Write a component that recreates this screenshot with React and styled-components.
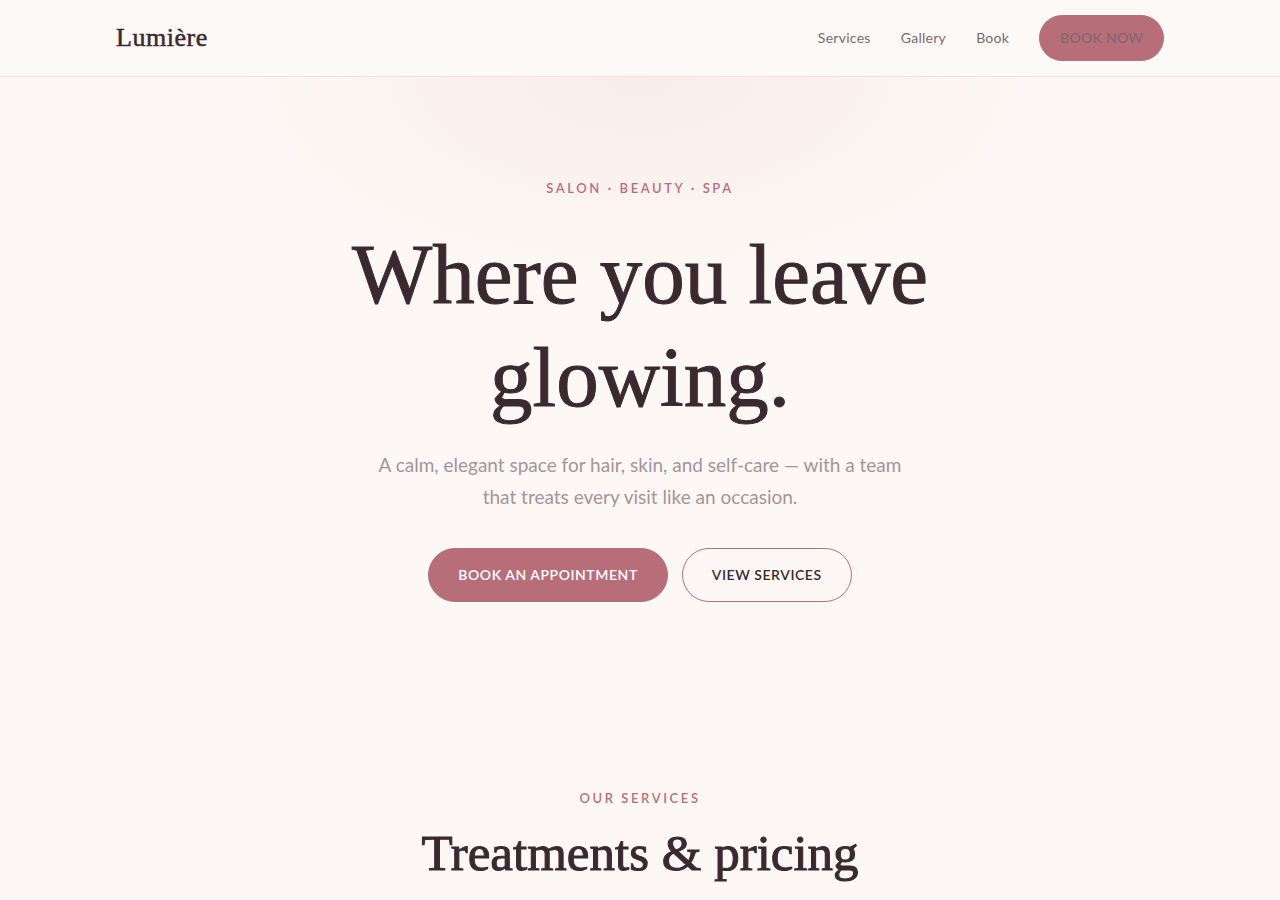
import React from "react";
import styled, { createGlobalStyle, css } from "styled-components";

const color = {
  page: "#fdf8f5",
  header: "#fdf9f6",
  line: "#f0e0e0",
  rose: "#b76e79",
  ink: "#3a2a30",
  nav: "#7d6870",
  muted: "#a39599",
};
const serif = '"Liberation Serif", "Times New Roman", serif';
const sans = 'Lato, "Liberation Sans", sans-serif';

const GlobalStyle = createGlobalStyle`
  *, *::before, *::after { box-sizing: border-box; }
  body {
    margin: 0;
    background: ${color.page};
    color: ${color.ink};
    font-family: ${sans};
    font-size: 16px;
  }
`;

const Header = styled.header`
  background: ${color.header};
  border-bottom: 1px solid ${color.line};
`;

const HeaderInner = styled.div`
  display: flex;
  align-items: center;
  justify-content: space-between;
  max-width: 1100px;
  margin: 0 auto;
  padding: 15px 26px;
`;

const Logo = styled.a`
  color: ${color.ink};
  font-family: ${serif};
  font-size: 26px;
  line-height: 32px;
  letter-spacing: 0.02em;
  text-decoration: none;
  -webkit-text-stroke: 0.02em ${color.ink};
`;

const Nav = styled.nav`
  display: flex;
  align-items: center;
  gap: 30px;
`;

const NavLink = styled.a`
  color: ${color.nav};
  font-size: 14px;
  line-height: 24px;
  letter-spacing: 0.02em;
  text-decoration: none;
`;

const Button = styled.button`
  border: 1px solid ${color.rose};
  border-radius: 30px;
  padding: 0 29px 2px;
  height: 54px;
  background: ${color.rose};
  color: #fff;
  font-family: ${sans};
  font-size: 14px;
  font-weight: 600;
  letter-spacing: 0.04em;
  text-transform: uppercase;
  cursor: pointer;

  ${({ $variant }) =>
    $variant === "outline" &&
    css`
      background: transparent;
      color: ${color.ink};
    `}
  ${({ $variant }) =>
    $variant === "nav" &&
    css`
      height: 46px;
      padding: 0 20px 2px;
      color: ${color.nav};
      font-weight: 400;
      letter-spacing: 0.02em;
    `}
`;

const Hero = styled.section`
  display: flex;
  flex-direction: column;
  align-items: center;
  padding: 100px 26px;
  text-align: center;
  background: radial-gradient(ellipse 410px 205px at 50% 0, #f8ece9, ${color.page});
`;

const Eyebrow = styled.p`
  margin: 0;
  color: ${color.rose};
  font-size: 13px;
  font-weight: 600;
  line-height: 22px;
  letter-spacing: 0.2em;
  text-transform: uppercase;
`;

const Title = styled.h1`
  max-width: 760px;
  margin: 24px 0 20px;
  font-family: ${serif};
  font-size: 85px;
  font-weight: 400;
  line-height: 103px;
  -webkit-text-stroke: 1px ${color.ink};
`;

const Lead = styled.p`
  max-width: 540px;
  margin: 0 0 35px;
  color: ${color.muted};
  font-size: 19px;
  line-height: 32px;
`;

const Actions = styled.div`
  display: flex;
  flex-wrap: wrap;
  justify-content: center;
  gap: 14px;
`;

const Services = styled.section`
  display: flex;
  flex-direction: column;
  align-items: center;
  padding: 85px 26px 0;
  text-align: center;
`;

const SectionTitle = styled.h2`
  margin: 12px 0 0;
  font-family: ${serif};
  font-size: 51px;
  font-weight: 400;
  line-height: 64px;
  -webkit-text-stroke: 0.02em ${color.ink};
`;

export default function App() {
  return (
    <>
      <GlobalStyle />
      <Header>
        <HeaderInner>
          <Logo href="#top">Lumière</Logo>
          <Nav aria-label="Main">
            <NavLink href="#services">Services</NavLink>
            <NavLink href="#gallery">Gallery</NavLink>
            <NavLink href="#book">Book</NavLink>
            <Button type="button" $variant="nav">Book now</Button>
          </Nav>
        </HeaderInner>
      </Header>
      <main id="top">
        <Hero>
          <Eyebrow>Salon · Beauty · Spa</Eyebrow>
          <Title>Where you leave glowing.</Title>
          <Lead>
            A calm, elegant space for hair, skin, and self-care — with a team that treats every
            visit like an occasion.
          </Lead>
          <Actions>
            <Button type="button">Book an appointment</Button>
            <Button type="button" $variant="outline">View services</Button>
          </Actions>
        </Hero>
        <Services id="services">
          <Eyebrow>Our services</Eyebrow>
          <SectionTitle>Treatments &amp; pricing</SectionTitle>
        </Services>
      </main>
    </>
  );
}
